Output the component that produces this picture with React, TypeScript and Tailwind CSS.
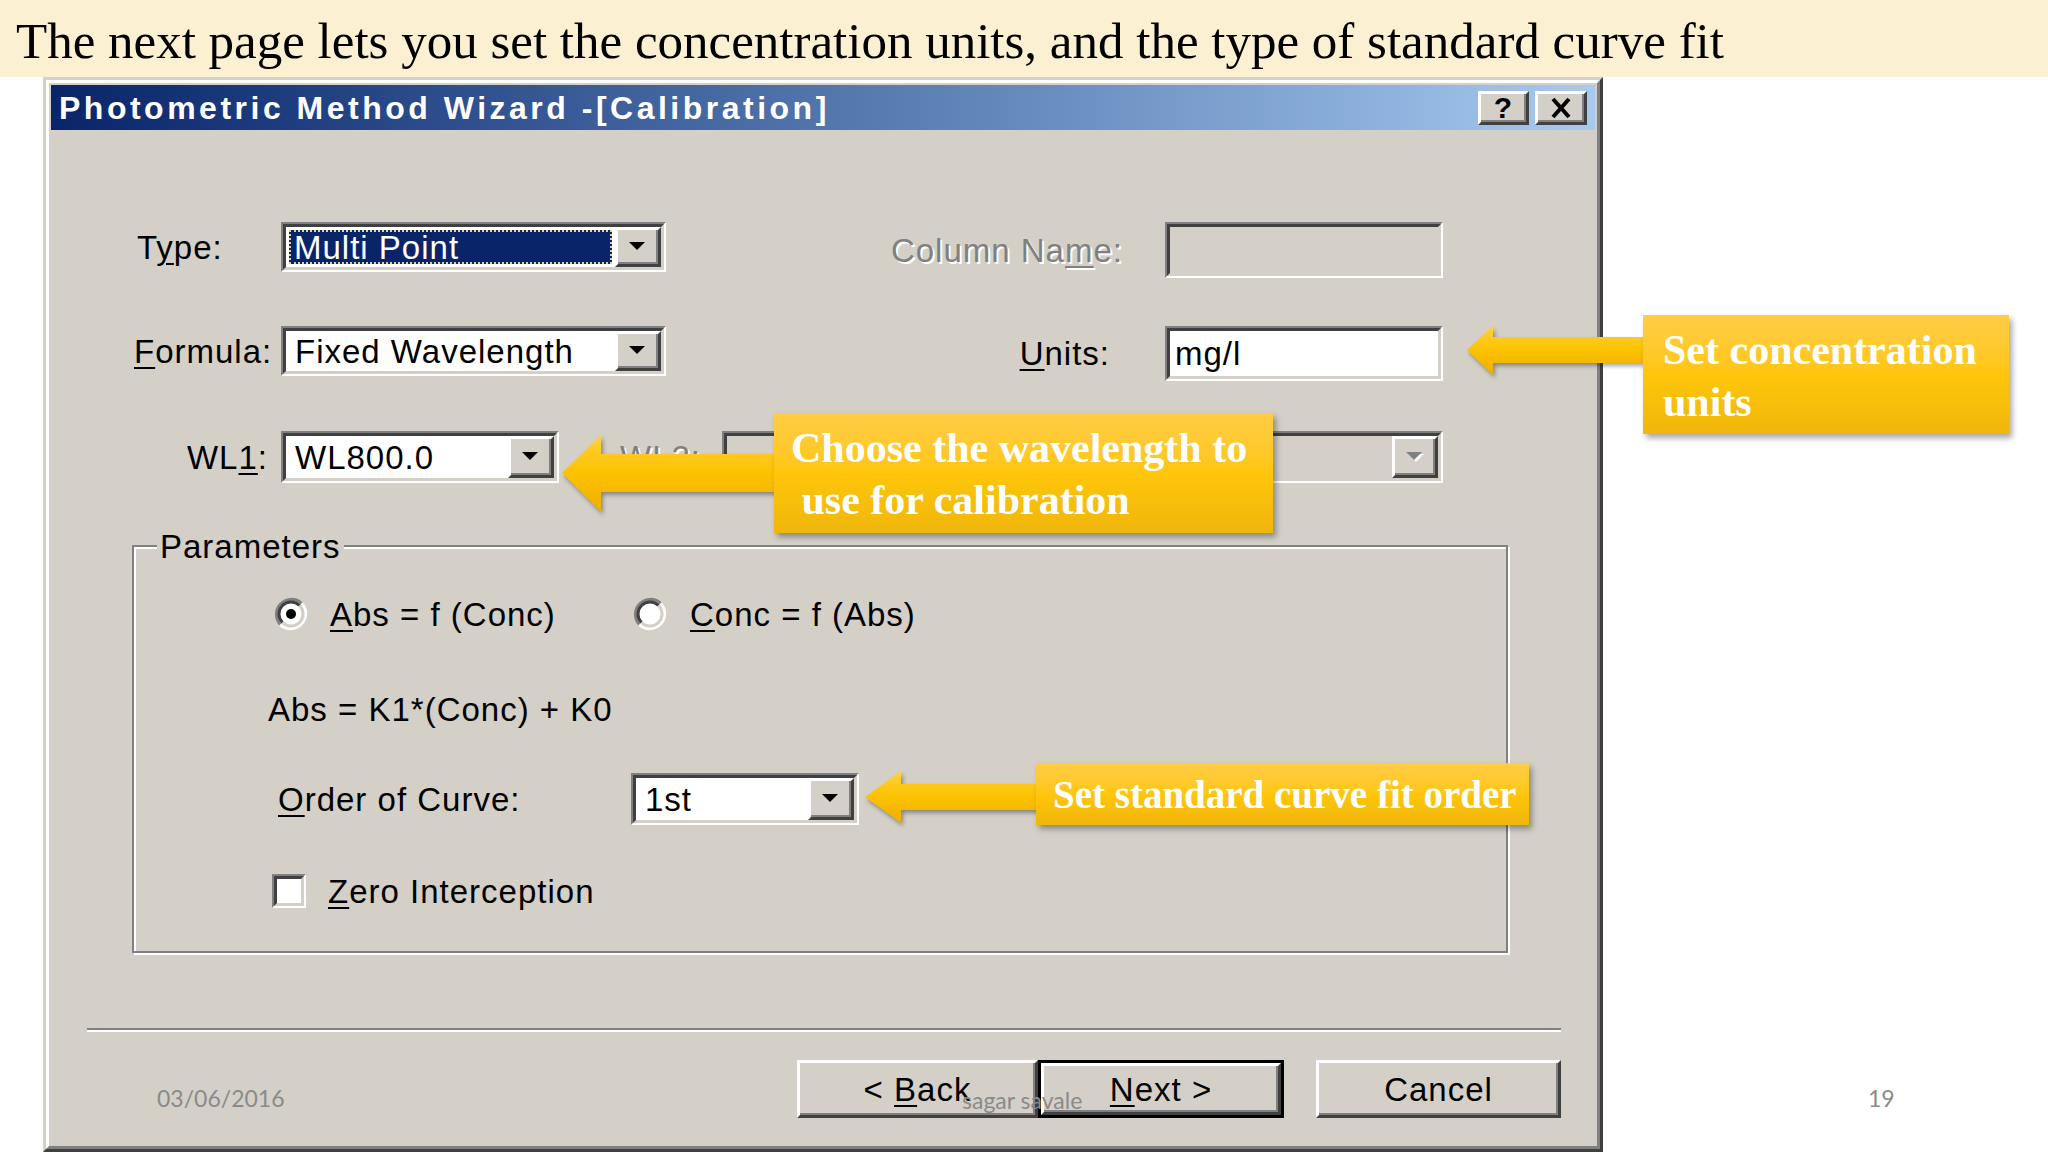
import React from "react";

const UI = "font-['Liberation_Sans',Arial,sans-serif]";
const SERIF = "font-['Liberation_Serif','Times_New_Roman',serif]";

const sunkenOuter =
  "border-2 border-t-[#808080] border-l-[#808080] border-r-white border-b-white";
const sunkenInner =
  "border-[3px] border-t-[#404040] border-l-[#404040] border-r-[#d4d0c8] border-b-[#d4d0c8]";
const raised =
  "border-[3px] border-t-white border-l-white border-r-[#404040] border-b-[#404040] shadow-[inset_-2px_-2px_0_#808080] bg-[#d4d0c8]";
const disabledText = "text-[#808080] [text-shadow:2px_2px_0_#ffffff]";
const callout =
  "absolute bg-linear-to-b from-[#ffcd45] via-[#ffc60a] to-[#efb60c] shadow-[3px_4px_6px_rgba(0,0,0,0.35)] text-white font-bold";

function Key({ children }: { children: React.ReactNode }) {
  return (
    <span className="underline decoration-[2px] underline-offset-[4px]">
      {children}
    </span>
  );
}

function DropButton({ disabled }: { disabled?: boolean }) {
  return (
    <div className={`${raised} flex w-[46px] shrink-0 items-center justify-center`}>
      <svg width="18" height="10" viewBox="0 0 18 10">
        {disabled && <polygon points="2,2 18,2 10,10" fill="#ffffff" />}
        <polygon points="0,0 16,0 8,8" fill={disabled ? "#808080" : "#000000"} />
      </svg>
    </div>
  );
}

function Combo({
  className,
  value,
  selected,
  disabled,
}: {
  className: string;
  value?: string;
  selected?: boolean;
  disabled?: boolean;
}) {
  return (
    <div className={`${className} ${sunkenOuter} flex shrink-0`}>
      <div
        className={`${sunkenInner} flex min-w-0 flex-1 ${
          disabled ? "bg-[#d4d0c8]" : "bg-white"
        }`}
      >
        <div className="flex min-w-0 flex-1 items-stretch p-[3px]">
          {selected ? (
            <div className="flex flex-1 items-center border-2 border-dotted border-[#e0d68a] bg-[#0a246a] pl-[3px] text-white">
              {value}
            </div>
          ) : (
            <div className="flex flex-1 items-center pl-[6px]">{value}</div>
          )}
        </div>
        <DropButton disabled={disabled} />
      </div>
    </div>
  );
}

function TextBox({
  className,
  value,
  disabled,
}: {
  className: string;
  value?: string;
  disabled?: boolean;
}) {
  return (
    <div className={`${className} ${sunkenOuter} flex shrink-0`}>
      <div
        className={`${sunkenInner} flex flex-1 items-center pl-[5px] ${
          disabled ? "bg-[#d4d0c8]" : "bg-white"
        }`}
      >
        {value}
      </div>
    </div>
  );
}

function Radio({ checked }: { checked?: boolean }) {
  return (
    <svg width="34" height="34" viewBox="0 0 34 34" className="shrink-0">
      <circle cx="17" cy="17" r="12" fill="#ffffff" />
      <path d="M6.4 27.6 A15 15 0 0 1 27.6 6.4" stroke="#808080" strokeWidth="3" fill="none" />
      <path d="M6.4 27.6 A15 15 0 0 0 27.6 6.4" stroke="#ffffff" strokeWidth="3" fill="none" />
      <path d="M8.5 25.5 A12 12 0 0 1 25.5 8.5" stroke="#404040" strokeWidth="3" fill="none" />
      <path d="M8.5 25.5 A12 12 0 0 0 25.5 8.5" stroke="#d4d0c8" strokeWidth="3" fill="none" />
      {checked && <circle cx="17" cy="17" r="5" fill="#000000" />}
    </svg>
  );
}

function Checkbox() {
  return (
    <div className={`${sunkenOuter} h-[34px] w-[34px] shrink-0`}>
      <div className={`${sunkenInner} h-full w-full bg-white`} />
    </div>
  );
}

function Arrow({
  className,
  id,
  w,
  h,
  points,
}: {
  className: string;
  id: string;
  w: number;
  h: number;
  points: string;
}) {
  return (
    <svg
      width={w}
      height={h}
      viewBox={`0 0 ${w} ${h}`}
      className={`${className} absolute drop-shadow-[2px_3px_2px_rgba(0,0,0,0.35)]`}
    >
      <defs>
        <linearGradient id={id} x1="0" y1="0" x2="0" y2="1">
          <stop offset="0" stopColor="#ffd03e" />
          <stop offset="0.5" stopColor="#fcc200" />
          <stop offset="1" stopColor="#eeae00" />
        </linearGradient>
      </defs>
      <polygon points={points} fill={`url(#${id})`} />
    </svg>
  );
}

export default function App() {
  return (
    <div className="relative h-[1152px] w-[2048px] overflow-hidden bg-white">
      <div
        className={`${SERIF} h-[77px] bg-[#fcf0d2] pl-[16px] pt-[16px] text-[51px] leading-none text-black`}
      >
        The next page lets you set the concentration units, and the type of standard curve fit
      </div>

      <div className="pl-[43px]">
        <div className="h-[1075px] w-[1560px] border-[3px] border-t-[#d4d0c8] border-l-[#d4d0c8] border-r-[#404040] border-b-[#404040]">
          <div
            className={`${UI} flex h-full flex-col border-[3px] border-t-white border-l-white border-r-[#808080] border-b-[#808080] bg-[#d4d0c8] p-[2px] text-[33px] leading-none tracking-[1px] text-black`}
          >
            <div className="flex h-[45px] shrink-0 items-center justify-between bg-linear-to-r from-[#0a246a] to-[#a6caf0] pl-[8px] pr-[8px]">
              <span className="text-[32px] font-bold tracking-[3.5px] text-white">
                Photometric Method Wizard -[Calibration]
              </span>
              <div className="flex gap-[6px]">
                <div className={`${raised} flex h-[34px] w-[51px] items-center justify-center text-[30px] font-bold`}>
                  ?
                </div>
                <div className={`${raised} flex h-[34px] w-[52px] items-center justify-center`}>
                  <svg width="22" height="22" viewBox="0 0 22 22">
                    <path d="M3 2 L19 20 M19 2 L3 20" stroke="#000000" strokeWidth="4" />
                  </svg>
                </div>
              </div>
            </div>

            <div className="mt-[92px] flex h-[56px] items-start">
              <div className="flex h-[50px] w-[230px] shrink-0 items-center pl-[86px]">
                <span>
                  T<Key>y</Key>pe:
                </span>
              </div>
              <Combo className="h-[50px] w-[385px]" value="Multi Point" selected />
              <div className={`${disabledText} flex h-[56px] w-[499px] shrink-0 items-center justify-end pr-[42px]`}>
                <span>
                  Column Na<Key>m</Key>e:
                </span>
              </div>
              <TextBox className="h-[56px] w-[278px]" disabled />
            </div>

            <div className="mt-[48px] flex h-[55px] items-start">
              <div className="flex h-[50px] w-[230px] shrink-0 items-center pl-[83px]">
                <span>
                  <Key>F</Key>ormula:
                </span>
              </div>
              <Combo className="h-[50px] w-[385px]" value="Fixed Wavelength" />
              <div className="flex h-[55px] w-[499px] shrink-0 items-center justify-end pr-[55px]">
                <span>
                  <Key>U</Key>nits:
                </span>
              </div>
              <TextBox className="h-[55px] w-[278px]" value="mg/l" />
            </div>

            <div className="mt-[50px] flex h-[52px] items-center">
              <div className="flex w-[230px] shrink-0 justify-end pr-[13px]">
                <span>
                  WL<Key>1</Key>:
                </span>
              </div>
              <Combo className="h-[52px] w-[278px]" value="WL800.0" />
              <div className={`${disabledText} w-[163px] shrink-0 pl-[61px]`}>WL2:</div>
              <Combo className="h-[52px] w-[721px]" disabled />
            </div>

            <div className="ml-[81px] mt-[62px] h-[408px] w-[1376px] shrink-0 border-2 border-[#808080] shadow-[inset_2px_2px_0_#ffffff,2px_2px_0_#ffffff]">
              <div className="-mt-[21px] ml-[23px] flex h-[40px] w-fit items-center bg-[#d4d0c8] px-[3px]">
                Parameters
              </div>

              <div className="mt-[28px] flex h-[40px] items-center pl-[140px]">
                <div className="flex w-[359px] items-center gap-[22px]">
                  <Radio checked />
                  <span>
                    <Key>A</Key>bs = f (Conc)
                  </span>
                </div>
                <div className="flex items-center gap-[23px]">
                  <Radio />
                  <span>
                    <Key>C</Key>onc = f (Abs)
                  </span>
                </div>
              </div>

              <div className="mt-[55px] flex h-[40px] items-center pl-[134px]">
                Abs = K1*(Conc) + K0
              </div>

              <div className="mt-[44px] flex h-[52px] items-center pl-[144px]">
                <div className="w-[353px] shrink-0">
                  <Key>O</Key>rder of Curve:
                </div>
                <Combo className="h-[52px] w-[228px]" value="1st" />
              </div>

              <div className="mt-[46px] flex h-[40px] items-center gap-[22px] pl-[138px]">
                <Checkbox />
                <span>
                  <Key>Z</Key>ero Interception
                </span>
              </div>
            </div>

            <div className="ml-[36px] mt-[75px] w-[1474px] shrink-0">
              <div className="h-[2px] bg-[#808080]" />
              <div className="h-[2px] bg-white" />
            </div>

            <div className="ml-[746px] mt-[28px] flex h-[58px] shrink-0">
              <div className={`${raised} flex w-[241px] items-center justify-center`}>
                <span className="whitespace-pre">
                  {"< "}
                  <Key>B</Key>ack
                </span>
              </div>
              <div className="w-[246px] border-[3px] border-black">
                <div className={`${raised} flex h-full items-center justify-center`}>
                  <span className="whitespace-pre">
                    <Key>N</Key>
                    {"ext >"}
                  </span>
                </div>
              </div>
              <div className={`${raised} ml-[32px] flex w-[245px] items-center justify-center`}>
                Cancel
              </div>
            </div>
          </div>
        </div>
      </div>

      <div className="absolute left-[157px] top-[1084px] font-['Lato',sans-serif] text-[23px] leading-[28px] text-[#8a8a8a]">
        03/06/2016
      </div>
      <div className="absolute left-[962px] top-[1086px] font-['Lato',sans-serif] text-[23px] leading-[28px] text-[#8a8a8a]">
        sagar savale
      </div>
      <div className="absolute left-[1868px] top-[1084px] font-['Lato',sans-serif] text-[23px] leading-[28px] text-[#8a8a8a]">
        19
      </div>

      <Arrow
        className="left-[1465px] top-[322px]"
        id="arrowA"
        w={182}
        h={58}
        points="2,28 28,4 28,15 180,15 180,41 28,41 28,53"
      />
      <div className={`${callout} ${SERIF} left-[1643px] top-[315px] h-[119px] w-[366px] pl-[20px] pt-[9px] text-[42px] leading-[52px]`}>
        Set concentration
        <br />
        units
      </div>

      <Arrow
        className="left-[558px] top-[430px]"
        id="arrowB"
        w={220}
        h={88}
        points="4,43 43,5 43,24 218,24 218,62 43,62 43,82"
      />
      <div className={`${callout} ${SERIF} left-[774px] top-[413px] h-[120px] w-[499px] whitespace-pre pl-[17px] pt-[9px] text-[42px] leading-[52px]`}>
        {"Choose the wavelength to\n use for calibration"}
      </div>

      <Arrow
        className="left-[862px] top-[766px]"
        id="arrowC"
        w={178}
        h={64}
        points="3,31 39,5 39,18 176,18 176,44 39,44 39,57"
      />
      <div className={`${callout} ${SERIF} left-[1036px] top-[763px] flex h-[62px] w-[493px] items-center pl-[17px] text-[39px] leading-none`}>
        Set standard curve fit order
      </div>
    </div>
  );
}
